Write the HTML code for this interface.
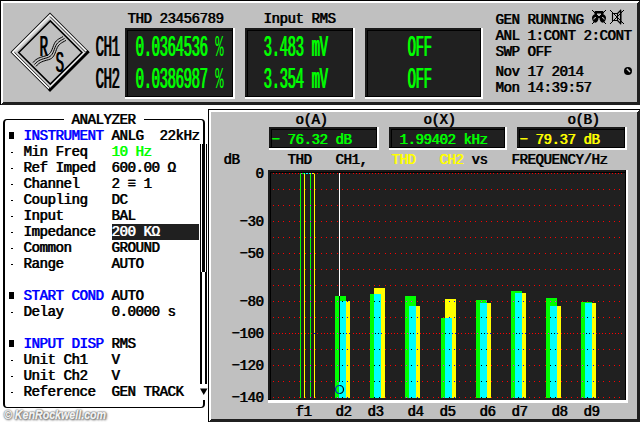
<!DOCTYPE html>
<html><head><meta charset="utf-8"><title>Audio Analyzer</title>
<style>
html,body{margin:0;padding:0;background:#fff;}
body{position:relative;width:640px;height:422px;overflow:hidden;}
body>div,body>svg{position:absolute;}
.t{font:14px "Liberation Mono",monospace;letter-spacing:-0.4px;line-height:16px;white-space:pre;text-shadow:0.8px 0 0;transform:scaleY(1.08);transform-origin:0 0;}
.b{transform:scaleY(2.16);}
.p{text-shadow:none;}
</style></head><body>
<div style="left:0px;top:0px;width:640px;height:105px;background:#000;"></div>
<div style="left:1px;top:1px;width:639px;height:104px;background:#fff;"></div>
<div style="left:3px;top:3px;width:637px;height:102px;background:#202020;"></div>
<div style="left:638px;top:2px;width:2px;height:1px;background:#202020;"></div>
<div style="left:639px;top:1px;width:1px;height:1px;background:#202020;"></div>
<div style="left:2px;top:103px;width:638px;height:2px;background:#202020;"></div>
<div style="left:1px;top:104px;width:2px;height:1px;background:#202020;"></div>
<div style="left:3px;top:3px;width:634px;height:99px;background:#c0c0c0;"></div>
<svg style="left:8px;top:10px" width="86" height="86" viewBox="8 10 86 86">
<polygon points="11.20,52.2 50,13.40 88.8,52.2 50,91.0" fill="#d6d6d6" stroke="#101010" stroke-width="1.150"/>
<polyline points="50,89.6 12.60,52.2 50,14.80 87.4,52.2" fill="none" stroke="#fff" stroke-width="1.300"/>
<polyline points="14.39,52.2 50,87.80" fill="none" stroke="#282828" stroke-width="1"/>
<polyline points="85.6,52.2 50,16.6" fill="none" stroke="#282828" stroke-width="1"/>
<polyline points="17,52.2 50,19.20 " fill="none" stroke="#a8a8a8" stroke-width="1"/>
<polyline points="50,87.9 85.7,52.2" fill="none" stroke="#b0b0b0" stroke-width="1.400"/>
<polyline points="50,86.7 84.5,52.2" fill="none" stroke="#fff" stroke-width="1"/>
<polyline points="48.8,88.80 50,89.9 87.7,52.2 86.6,51.0" fill="none" stroke="#000" stroke-width="2.600" stroke-linejoin="miter"/>
<polygon points="18.69,52.5 50.3,20.9 81.9,52.5 50.3,84.1" fill="#c0c0c0" stroke="#000" stroke-width="1.600"/>
<path d="M33.00,62.60 C36.50,58.10 40.50,57.30 45.50,55.90 S51.50,51.10 53.50,45.60 S58.50,39.10 63.00,36.60" fill="none" stroke="#000" stroke-width="1"/>
<path d="M34.50,64.50 C38.00,60.00 42.00,59.20 47.00,57.80 S53.00,53.00 55.00,47.50 S60.00,41.00 64.50,38.50" fill="none" stroke="#000" stroke-width="1"/>
<path d="M36.00,66.40 C39.50,61.90 43.50,61.10 48.50,59.70 S54.50,54.90 56.50,49.40 S61.50,42.90 66.00,40.40" fill="none" stroke="#000" stroke-width="1"/>
</svg>
<div class="t b" style="left:39.2px;top:30px;color:#000">R</div>
<div class="t b" style="left:55.2px;top:46px;color:#000">S</div>
<div class="t b" style="left:95.2px;top:30px;color:#000">CH1</div>
<div class="t b" style="left:95.2px;top:62px;color:#000">CH2</div>
<div class="t" style="left:127.2px;top:10px;color:#000;">THD 23456789</div>
<div style="left:125px;top:28px;width:110px;height:71px;background:#fff;"></div>
<div style="left:125px;top:28px;width:108px;height:69px;background:#000;"></div>
<div style="left:125px;top:28px;width:107px;height:68px;background:#1a1a1a;"></div>
<div style="left:127px;top:30px;width:105px;height:66px;background:#000;"></div>
<div style="left:128px;top:31px;width:104px;height:65px;background:#202020;"></div>
<div class="t b" style="left:135.2px;top:30px;color:#00ff00">0.0364536 <span class="p">%</span></div>
<div class="t b" style="left:135.2px;top:62px;color:#00ff00">0.0386987 <span class="p">%</span></div>
<div class="t" style="left:263.2px;top:10px;color:#000;">Input RMS</div>
<div style="left:245px;top:28px;width:110px;height:71px;background:#fff;"></div>
<div style="left:245px;top:28px;width:108px;height:69px;background:#000;"></div>
<div style="left:245px;top:28px;width:107px;height:68px;background:#1a1a1a;"></div>
<div style="left:247px;top:30px;width:105px;height:66px;background:#000;"></div>
<div style="left:248px;top:31px;width:104px;height:65px;background:#202020;"></div>
<div class="t b" style="left:263.2px;top:30px;color:#00ff00">3.483 mV</div>
<div class="t b" style="left:263.2px;top:62px;color:#00ff00">3.354 mV</div>
<div style="left:365px;top:28px;width:118px;height:71px;background:#fff;"></div>
<div style="left:365px;top:28px;width:116px;height:69px;background:#000;"></div>
<div style="left:365px;top:28px;width:115px;height:68px;background:#1a1a1a;"></div>
<div style="left:367px;top:30px;width:113px;height:66px;background:#000;"></div>
<div style="left:368px;top:31px;width:112px;height:65px;background:#202020;"></div>
<div class="t b" style="left:407.2px;top:30px;color:#00ff00">OFF</div>
<div class="t b" style="left:407.2px;top:62px;color:#00ff00">OFF</div>
<div class="t" style="left:495.2px;top:11px;color:#000;">GEN RUNNING</div>
<div class="t" style="left:495.2px;top:27px;color:#000;">ANL 1:CONT 2:CONT</div>
<div class="t" style="left:495.2px;top:43px;color:#000;">SWP OFF</div>
<div class="t" style="left:495.2px;top:63px;color:#000;">Nov 17 2014</div>
<div class="t" style="left:495.2px;top:79px;color:#000;">Mon 14:39:57</div>
<svg style="left:588px;top:7px" width="40" height="20" viewBox="588 7 40 20">
<g fill="none" stroke="#000">
<path d="M594.500,15 V12 q0,-1 1,-1 h7 q1,0 1,1 V15 h-2.500 v-1.500 h-4 V15 z" fill="#000" stroke="none"/>
<path d="M595.200,14.500 c-2.400,0 -3.200,2 -3.200,3.600 c0,2 1.600,4.600 3.300,4.600 c1.800,0 3.200,-2.400 3.200,-4.400 c0,-2 -1.200,-3.800 -3.300,-3.800 z" fill="#000" stroke="none"/>
<path d="M602.800,14.500 c2.400,0 3.200,2 3.200,3.600 c0,2 -1.600,4.600 -3.300,4.600 c-1.800,0 -3.200,-2.400 -3.200,-4.400 c0,-2 1.200,-3.800 3.300,-3.800 z" fill="#000" stroke="none"/>
<path d="M593.800,19.500 q0.200,-2.200 2.200,-2 M604.200,19.500 q-0.200,-2.200 -2.200,-2" stroke="#d0d0d0" stroke-width="1"/>
<path d="M592,10 L606,24 M606,10 L592,24" stroke-width="1"/>
<path d="M612.500,13.500 h5 v7 h-5 z M617.500,13.500 L620.500,10.500 V23.500 L617.500,20.500" stroke-width="1.150"/>
<path d="M621,10.500 V23.500" stroke-width="1"/>
<path d="M610,10 L624,24 M624,10 L610,24" stroke-width="1"/>
</g></svg>
<svg style="left:622px;top:65px" width="12" height="12" viewBox="622 65 12 12"><circle cx="628" cy="71" r="4" fill="#000"/><path d="M626.800,68.800 L630,72" stroke="#c8c8c8" stroke-width="1.500" fill="none"/></svg>
<div style="left:3px;top:119px;width:198px;height:287px;border:2px solid #000;border-top-width:1px;border-bottom-width:1px;border-radius:4px;box-sizing:content-box"></div>
<div style="left:64px;top:118px;width:80px;height:4px;background:#fff;"></div>
<div class="t" style="left:71.2px;top:111px;color:#000;">ANALYZER</div>
<div style="left:112px;top:224px;width:88px;height:16px;background:#202020;"></div>
<div style="left:9px;top:132px;width:5px;height:7px;background:#000;"></div>
<div class="t" style="left:23.2px;top:127px;color:#0000ff;">INSTRUMENT</div>
<div class="t" style="left:111.2px;top:127px;color:#000;">ANLG  22kHz</div>
<div style="left:11px;top:152px;width:2px;height:1px;background:#000;"></div>
<div class="t" style="left:23.2px;top:143px;color:#000;">Min Freq</div>
<div class="t" style="left:111.2px;top:143px;color:#00ff00;">10 Hz</div>
<div style="left:11px;top:168px;width:2px;height:1px;background:#000;"></div>
<div class="t" style="left:23.2px;top:159px;color:#000;">Ref Imped</div>
<div class="t" style="left:111.2px;top:159px;color:#000;">600.00 Ω</div>
<div style="left:11px;top:184px;width:2px;height:1px;background:#000;"></div>
<div class="t" style="left:23.2px;top:175px;color:#000;">Channel</div>
<div class="t" style="left:111.2px;top:175px;color:#000;">2 ≡ 1</div>
<div style="left:11px;top:200px;width:2px;height:1px;background:#000;"></div>
<div class="t" style="left:23.2px;top:191px;color:#000;">Coupling</div>
<div class="t" style="left:111.2px;top:191px;color:#000;">DC</div>
<div style="left:11px;top:216px;width:2px;height:1px;background:#000;"></div>
<div class="t" style="left:23.2px;top:207px;color:#000;">Input</div>
<div class="t" style="left:111.2px;top:207px;color:#000;">BAL</div>
<div style="left:11px;top:232px;width:2px;height:1px;background:#000;"></div>
<div class="t" style="left:23.2px;top:223px;color:#000;">Impedance</div>
<div class="t" style="left:111.2px;top:223px;color:#fff;">200 KΩ</div>
<div style="left:11px;top:248px;width:2px;height:1px;background:#000;"></div>
<div class="t" style="left:23.2px;top:239px;color:#000;">Common</div>
<div class="t" style="left:111.2px;top:239px;color:#000;">GROUND</div>
<div style="left:11px;top:264px;width:2px;height:1px;background:#000;"></div>
<div class="t" style="left:23.2px;top:255px;color:#000;">Range</div>
<div class="t" style="left:111.2px;top:255px;color:#000;">AUTO</div>
<div style="left:9px;top:292px;width:5px;height:7px;background:#000;"></div>
<div class="t" style="left:23.2px;top:287px;color:#0000ff;">START COND</div>
<div class="t" style="left:111.2px;top:287px;color:#000;">AUTO</div>
<div style="left:11px;top:312px;width:2px;height:1px;background:#000;"></div>
<div class="t" style="left:23.2px;top:303px;color:#000;">Delay</div>
<div class="t" style="left:111.2px;top:303px;color:#000;">0.0000 s</div>
<div style="left:9px;top:340px;width:5px;height:7px;background:#000;"></div>
<div class="t" style="left:23.2px;top:335px;color:#0000ff;">INPUT DISP</div>
<div class="t" style="left:111.2px;top:335px;color:#000;">RMS</div>
<div style="left:11px;top:360px;width:2px;height:1px;background:#000;"></div>
<div class="t" style="left:23.2px;top:351px;color:#000;">Unit Ch1</div>
<div class="t" style="left:111.2px;top:351px;color:#000;">V</div>
<div style="left:11px;top:376px;width:2px;height:1px;background:#000;"></div>
<div class="t" style="left:23.2px;top:367px;color:#000;">Unit Ch2</div>
<div class="t" style="left:111.2px;top:367px;color:#000;">V</div>
<div style="left:11px;top:392px;width:2px;height:1px;background:#000;"></div>
<div class="t" style="left:23.2px;top:383px;color:#000;">Reference</div>
<div class="t" style="left:111.2px;top:383px;color:#000;">GEN TRACK</div>
<div style="left:199px;top:144px;width:9px;height:240px;background:#fff;"></div>
<div style="left:200px;top:144px;width:1px;height:240px;background:#000;"></div>
<div style="left:206px;top:144px;width:1px;height:240px;background:#000;"></div>
<div style="left:202px;top:144px;width:3px;height:128px;background:#000;"></div>
<div style="left:201px;top:272px;width:1px;height:112px;background:#000;"></div>
<div style="left:205px;top:272px;width:1px;height:112px;background:#000;"></div>
<div style="left:199px;top:384px;width:9px;height:16px;background:#fff;"></div>
<svg style="left:199px;top:387px" width="10" height="9" viewBox="0 0 10 9"><polygon points="1,1.500 8.500,1.500 4.750,8" fill="#000"/></svg>
<div style="left:3.500px;top:406.500px;font:italic bold 13.500px 'Liberation Sans',sans-serif;color:#f6f6f6;-webkit-text-stroke:0.350px #f6f6f6;white-space:pre;line-height:16px;transform:scaleX(0.790);transform-origin:0 0;text-shadow:0 0 1px #555,0 0 2px #666,0 0 2px #777,1px 1px 2px #888,1px 1px 3px #999">© KenRockwell.com</div>
<div style="left:208px;top:109px;width:432px;height:313px;background:#000;"></div>
<div style="left:209px;top:110px;width:431px;height:312px;background:#fff;"></div>
<div style="left:211px;top:112px;width:429px;height:310px;background:#202020;"></div>
<div style="left:638px;top:111px;width:2px;height:1px;background:#202020;"></div>
<div style="left:639px;top:110px;width:1px;height:1px;background:#202020;"></div>
<div style="left:210px;top:420px;width:1px;height:2px;background:#202020;"></div>
<div style="left:209px;top:421px;width:1px;height:1px;background:#202020;"></div>
<div style="left:211px;top:112px;width:426px;height:307px;background:#c0c0c0;"></div>
<div class="t" style="left:295.2px;top:111px;color:#000;">o(A)</div>
<div class="t" style="left:423.2px;top:111px;color:#000;">o(X)</div>
<div class="t" style="left:567.2px;top:111px;color:#000;">o(B)</div>
<div style="left:269px;top:127px;width:110px;height:23px;background:#fff;"></div>
<div style="left:269px;top:127px;width:108px;height:21px;background:#000;"></div>
<div style="left:269px;top:127px;width:107px;height:20px;background:#1a1a1a;"></div>
<div style="left:271px;top:129px;width:105px;height:18px;background:#000;"></div>
<div style="left:272px;top:130px;width:104px;height:17px;background:#202020;"></div>
<div style="left:389px;top:127px;width:118px;height:23px;background:#fff;"></div>
<div style="left:389px;top:127px;width:116px;height:21px;background:#000;"></div>
<div style="left:389px;top:127px;width:115px;height:20px;background:#1a1a1a;"></div>
<div style="left:391px;top:129px;width:113px;height:18px;background:#000;"></div>
<div style="left:392px;top:130px;width:112px;height:17px;background:#202020;"></div>
<div style="left:517px;top:127px;width:110px;height:23px;background:#fff;"></div>
<div style="left:517px;top:127px;width:108px;height:21px;background:#000;"></div>
<div style="left:517px;top:127px;width:107px;height:20px;background:#1a1a1a;"></div>
<div style="left:519px;top:129px;width:105px;height:18px;background:#000;"></div>
<div style="left:520px;top:130px;width:104px;height:17px;background:#202020;"></div>
<div class="t" style="left:271.2px;top:131px;color:#00ff00;">− 76.32 dB</div>
<div class="t" style="left:399.2px;top:131px;color:#00ff00;">1.99402 kHz</div>
<div class="t" style="left:519.2px;top:131px;color:#ffff00;">− 79.37 dB</div>
<div class="t" style="left:223.2px;top:151px;color:#000;">dB</div>
<div class="t" style="left:287.2px;top:151px;color:#000;">THD   CH1,</div>
<div class="t" style="left:391.2px;top:151px;color:#ffff00;">THD   CH2</div>
<div class="t" style="left:471.2px;top:151px;color:#000;">vs</div>
<div class="t" style="left:511.2px;top:151px;color:#000;">FREQUENCY/Hz</div>
<div class="t" style="left:255.2px;top:165px;color:#000;">0</div>
<div class="t" style="left:239.2px;top:213px;color:#000;">−30</div>
<div class="t" style="left:239.2px;top:245px;color:#000;">−50</div>
<div class="t" style="left:239.2px;top:293px;color:#000;">−80</div>
<div class="t" style="left:231.2px;top:325px;color:#000;">−100</div>
<div class="t" style="left:231.2px;top:357px;color:#000;">−120</div>
<div class="t" style="left:231.2px;top:389px;color:#000;">−140</div>
<div style="left:268px;top:170px;width:360px;height:233px;background:#fff;"></div>
<div style="left:268px;top:170px;width:358px;height:230px;background:#000;"></div>
<div style="left:268px;top:170px;width:357px;height:229px;background:#1a1a1a;"></div>
<div style="left:270px;top:172px;width:355px;height:227px;background:#000;"></div>
<div style="left:271px;top:173px;width:354px;height:227px;background:#202020;"></div>
<svg style="left:271px;top:172px" width="355" height="228" viewBox="271 172 355 228" shape-rendering="crispEdges"><defs><pattern id="gR" x="273" y="173" width="16" height="16" patternUnits="userSpaceOnUse"><rect x="0" y="0" width="1" height="1" fill="#ff0000"/><rect x="5" y="0" width="1" height="1" fill="#ff0000"/><rect x="10" y="0" width="1" height="1" fill="#ff0000"/></pattern><pattern id="dR" x="273" y="173" width="16" height="160" patternUnits="userSpaceOnUse"><rect x="0" y="0" width="1" height="1" fill="#ff0000"/><rect x="3" y="0" width="1" height="1" fill="#ff0000"/><rect x="6" y="0" width="1" height="1" fill="#ff0000"/><rect x="9" y="0" width="1" height="1" fill="#ff0000"/><rect x="12" y="0" width="1" height="1" fill="#ff0000"/></pattern><pattern id="gM" x="273" y="173" width="16" height="16" patternUnits="userSpaceOnUse"><rect x="0" y="0" width="1" height="1" fill="#ff00ff"/><rect x="5" y="0" width="1" height="1" fill="#ff00ff"/><rect x="10" y="0" width="1" height="1" fill="#ff00ff"/></pattern><pattern id="dM" x="273" y="173" width="16" height="160" patternUnits="userSpaceOnUse"><rect x="0" y="0" width="1" height="1" fill="#ff00ff"/><rect x="3" y="0" width="1" height="1" fill="#ff00ff"/><rect x="6" y="0" width="1" height="1" fill="#ff00ff"/><rect x="9" y="0" width="1" height="1" fill="#ff00ff"/><rect x="12" y="0" width="1" height="1" fill="#ff00ff"/></pattern><pattern id="gK" x="273" y="173" width="16" height="16" patternUnits="userSpaceOnUse"><rect x="0" y="0" width="1" height="1" fill="#000000"/><rect x="5" y="0" width="1" height="1" fill="#000000"/><rect x="10" y="0" width="1" height="1" fill="#000000"/></pattern><pattern id="dK" x="273" y="173" width="16" height="160" patternUnits="userSpaceOnUse"><rect x="0" y="0" width="1" height="1" fill="#000000"/><rect x="3" y="0" width="1" height="1" fill="#000000"/><rect x="6" y="0" width="1" height="1" fill="#000000"/><rect x="9" y="0" width="1" height="1" fill="#000000"/><rect x="12" y="0" width="1" height="1" fill="#000000"/></pattern><pattern id="gB" x="273" y="173" width="16" height="16" patternUnits="userSpaceOnUse"><rect x="0" y="0" width="1" height="1" fill="#0000ff"/><rect x="5" y="0" width="1" height="1" fill="#0000ff"/><rect x="10" y="0" width="1" height="1" fill="#0000ff"/></pattern><pattern id="dB" x="273" y="173" width="16" height="160" patternUnits="userSpaceOnUse"><rect x="0" y="0" width="1" height="1" fill="#0000ff"/><rect x="3" y="0" width="1" height="1" fill="#0000ff"/><rect x="6" y="0" width="1" height="1" fill="#0000ff"/><rect x="9" y="0" width="1" height="1" fill="#0000ff"/><rect x="12" y="0" width="1" height="1" fill="#0000ff"/></pattern></defs><rect x="273" y="173" width="352" height="1" fill="url(#dR)"/><rect x="273" y="333" width="352" height="1" fill="url(#dR)"/><rect x="273" y="174" width="352" height="159" fill="url(#gR)"/><rect x="273" y="334" width="352" height="64" fill="url(#gR)"/><rect x="300" y="173" width="1" height="225" fill="#00ff00"/><rect x="304" y="173" width="1" height="225" fill="#ffff00"/><rect x="310" y="173" width="1" height="225" fill="#00ff00"/><rect x="314" y="173" width="1" height="225" fill="#ffff00"/><rect x="300" y="173" width="4" height="1" fill="#00ff00"/><rect x="310" y="173" width="4" height="1" fill="#ffff00"/><rect x="304" y="173" width="1" height="1" fill="#00ffff"/><rect x="306" y="173" width="2" height="1" fill="#00ffff"/><rect x="309" y="173" width="1" height="1" fill="#00ffff"/><rect x="310" y="333" width="1" height="1" fill="url(#dM)"/><rect x="310" y="174" width="1" height="159" fill="url(#gM)"/><rect x="310" y="334" width="1" height="64" fill="url(#gM)"/><rect x="300" y="333" width="1" height="1" fill="url(#dM)"/><rect x="300" y="174" width="1" height="159" fill="url(#gM)"/><rect x="300" y="334" width="1" height="64" fill="url(#gM)"/><rect x="304" y="333" width="1" height="1" fill="url(#dB)"/><rect x="304" y="174" width="1" height="159" fill="url(#gB)"/><rect x="304" y="334" width="1" height="64" fill="url(#gB)"/><rect x="314" y="333" width="1" height="1" fill="url(#dB)"/><rect x="314" y="174" width="1" height="159" fill="url(#gB)"/><rect x="314" y="334" width="1" height="64" fill="url(#gB)"/><rect x="301" y="173" width="1" height="1" fill="#ff00ff"/><rect x="311" y="173" width="1" height="1" fill="#0000ff"/><rect x="305" y="173" width="1" height="1" fill="#202020"/><rect x="308" y="173" width="1" height="1" fill="#202020"/><rect x="314" y="173" width="1" height="1" fill="#ff0000"/><rect x="335" y="296" width="11" height="102" fill="#00ff00"/><rect x="339" y="301" width="11" height="97" fill="#ffff00"/><rect x="339" y="301" width="7" height="97" fill="#00ffff"/><rect x="335" y="333" width="4" height="1" fill="url(#dM)"/><rect x="335" y="296" width="4" height="37" fill="url(#gM)"/><rect x="335" y="334" width="4" height="64" fill="url(#gM)"/><rect x="346" y="333" width="4" height="1" fill="url(#dB)"/><rect x="346" y="301" width="4" height="32" fill="url(#gB)"/><rect x="346" y="334" width="4" height="64" fill="url(#gB)"/><rect x="339" y="333" width="7" height="1" fill="url(#dK)"/><rect x="339" y="301" width="7" height="32" fill="url(#gK)"/><rect x="339" y="334" width="7" height="64" fill="url(#gK)"/><rect x="339" y="296" width="7" height="5" fill="url(#gM)"/><rect x="370" y="294" width="11" height="104" fill="#00ff00"/><rect x="374" y="288" width="11" height="110" fill="#ffff00"/><rect x="374" y="294" width="7" height="104" fill="#00ffff"/><rect x="370" y="333" width="4" height="1" fill="url(#dM)"/><rect x="370" y="294" width="4" height="39" fill="url(#gM)"/><rect x="370" y="334" width="4" height="64" fill="url(#gM)"/><rect x="381" y="333" width="4" height="1" fill="url(#dB)"/><rect x="381" y="288" width="4" height="45" fill="url(#gB)"/><rect x="381" y="334" width="4" height="64" fill="url(#gB)"/><rect x="374" y="333" width="7" height="1" fill="url(#dK)"/><rect x="374" y="294" width="7" height="39" fill="url(#gK)"/><rect x="374" y="334" width="7" height="64" fill="url(#gK)"/><rect x="374" y="288" width="7" height="6" fill="url(#gB)"/><rect x="405" y="296" width="11" height="102" fill="#00ff00"/><rect x="409" y="306" width="11" height="92" fill="#ffff00"/><rect x="409" y="306" width="7" height="92" fill="#00ffff"/><rect x="405" y="333" width="4" height="1" fill="url(#dM)"/><rect x="405" y="296" width="4" height="37" fill="url(#gM)"/><rect x="405" y="334" width="4" height="64" fill="url(#gM)"/><rect x="416" y="333" width="4" height="1" fill="url(#dB)"/><rect x="416" y="306" width="4" height="27" fill="url(#gB)"/><rect x="416" y="334" width="4" height="64" fill="url(#gB)"/><rect x="409" y="333" width="7" height="1" fill="url(#dK)"/><rect x="409" y="306" width="7" height="27" fill="url(#gK)"/><rect x="409" y="334" width="7" height="64" fill="url(#gK)"/><rect x="409" y="296" width="7" height="10" fill="url(#gM)"/><rect x="441" y="318" width="11" height="80" fill="#00ff00"/><rect x="445" y="299" width="11" height="99" fill="#ffff00"/><rect x="445" y="318" width="7" height="80" fill="#00ffff"/><rect x="441" y="333" width="4" height="1" fill="url(#dM)"/><rect x="441" y="318" width="4" height="15" fill="url(#gM)"/><rect x="441" y="334" width="4" height="64" fill="url(#gM)"/><rect x="452" y="333" width="4" height="1" fill="url(#dB)"/><rect x="452" y="299" width="4" height="34" fill="url(#gB)"/><rect x="452" y="334" width="4" height="64" fill="url(#gB)"/><rect x="445" y="333" width="7" height="1" fill="url(#dK)"/><rect x="445" y="318" width="7" height="15" fill="url(#gK)"/><rect x="445" y="334" width="7" height="64" fill="url(#gK)"/><rect x="445" y="299" width="7" height="19" fill="url(#gB)"/><rect x="476" y="300" width="11" height="98" fill="#00ff00"/><rect x="480" y="303" width="11" height="95" fill="#ffff00"/><rect x="480" y="303" width="7" height="95" fill="#00ffff"/><rect x="476" y="333" width="4" height="1" fill="url(#dM)"/><rect x="476" y="300" width="4" height="33" fill="url(#gM)"/><rect x="476" y="334" width="4" height="64" fill="url(#gM)"/><rect x="487" y="333" width="4" height="1" fill="url(#dB)"/><rect x="487" y="303" width="4" height="30" fill="url(#gB)"/><rect x="487" y="334" width="4" height="64" fill="url(#gB)"/><rect x="480" y="333" width="7" height="1" fill="url(#dK)"/><rect x="480" y="303" width="7" height="30" fill="url(#gK)"/><rect x="480" y="334" width="7" height="64" fill="url(#gK)"/><rect x="480" y="300" width="7" height="3" fill="url(#gM)"/><rect x="511" y="291" width="11" height="107" fill="#00ff00"/><rect x="515" y="293" width="11" height="105" fill="#ffff00"/><rect x="515" y="293" width="7" height="105" fill="#00ffff"/><rect x="511" y="333" width="4" height="1" fill="url(#dM)"/><rect x="511" y="291" width="4" height="42" fill="url(#gM)"/><rect x="511" y="334" width="4" height="64" fill="url(#gM)"/><rect x="522" y="333" width="4" height="1" fill="url(#dB)"/><rect x="522" y="293" width="4" height="40" fill="url(#gB)"/><rect x="522" y="334" width="4" height="64" fill="url(#gB)"/><rect x="515" y="333" width="7" height="1" fill="url(#dK)"/><rect x="515" y="293" width="7" height="40" fill="url(#gK)"/><rect x="515" y="334" width="7" height="64" fill="url(#gK)"/><rect x="515" y="291" width="7" height="2" fill="url(#gM)"/><rect x="546" y="298" width="11" height="100" fill="#00ff00"/><rect x="550" y="306" width="11" height="92" fill="#ffff00"/><rect x="550" y="306" width="7" height="92" fill="#00ffff"/><rect x="546" y="333" width="4" height="1" fill="url(#dM)"/><rect x="546" y="298" width="4" height="35" fill="url(#gM)"/><rect x="546" y="334" width="4" height="64" fill="url(#gM)"/><rect x="557" y="333" width="4" height="1" fill="url(#dB)"/><rect x="557" y="306" width="4" height="27" fill="url(#gB)"/><rect x="557" y="334" width="4" height="64" fill="url(#gB)"/><rect x="550" y="333" width="7" height="1" fill="url(#dK)"/><rect x="550" y="306" width="7" height="27" fill="url(#gK)"/><rect x="550" y="334" width="7" height="64" fill="url(#gK)"/><rect x="550" y="298" width="7" height="8" fill="url(#gM)"/><rect x="581" y="302" width="11" height="96" fill="#00ff00"/><rect x="585" y="303" width="11" height="95" fill="#ffff00"/><rect x="585" y="303" width="7" height="95" fill="#00ffff"/><rect x="581" y="333" width="4" height="1" fill="url(#dM)"/><rect x="581" y="302" width="4" height="31" fill="url(#gM)"/><rect x="581" y="334" width="4" height="64" fill="url(#gM)"/><rect x="592" y="333" width="4" height="1" fill="url(#dB)"/><rect x="592" y="303" width="4" height="30" fill="url(#gB)"/><rect x="592" y="334" width="4" height="64" fill="url(#gB)"/><rect x="585" y="333" width="7" height="1" fill="url(#dK)"/><rect x="585" y="303" width="7" height="30" fill="url(#gK)"/><rect x="585" y="334" width="7" height="64" fill="url(#gK)"/><rect x="585" y="302" width="7" height="1" fill="url(#gM)"/><rect x="339" y="173" width="1" height="123" fill="#fff"/><rect x="339" y="296" width="1" height="86" fill="#101820"/></svg>
<svg style="left:334px;top:384px" width="12" height="12" viewBox="334 384 12 12"><path d="M339.500,385.500 A4,4 0 0 0 339.500,393.500" fill="none" stroke="#0020d0" stroke-width="1.200"/><path d="M339.500,385.500 A4,4 0 0 1 339.500,393.500" fill="none" stroke="#000" stroke-width="1.200"/></svg>
<div class="t" style="left:295.2px;top:403px;color:#000;">f1</div>
<div class="t" style="left:335.2px;top:403px;color:#000;">d2</div>
<div class="t" style="left:367.2px;top:403px;color:#000;">d3</div>
<div class="t" style="left:407.2px;top:403px;color:#000;">d4</div>
<div class="t" style="left:439.2px;top:403px;color:#000;">d5</div>
<div class="t" style="left:479.2px;top:403px;color:#000;">d6</div>
<div class="t" style="left:511.2px;top:403px;color:#000;">d7</div>
<div class="t" style="left:551.2px;top:403px;color:#000;">d8</div>
<div class="t" style="left:583.2px;top:403px;color:#000;">d9</div>
</body></html>
